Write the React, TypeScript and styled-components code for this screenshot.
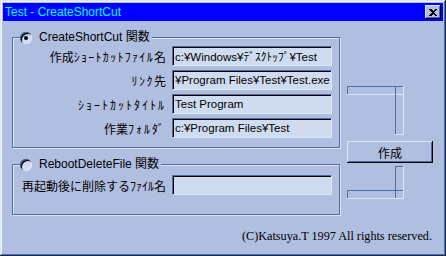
import styled, { createGlobalStyle } from 'styled-components';

const C = {
  bg: '#b0bee0',
  dark: '#4e6ca8',
  light: '#dce6f8',
  field: '#cfdcf0',
  shadow: '#1c2a52',
};

const GlobalStyle = createGlobalStyle`
  html, body { margin: 0; padding: 0; background: ${C.bg}; }
  * { box-sizing: border-box; }
`;

const Window = styled.div`
  width: 446px;
  height: 256px;
  padding: 3px;
  background: ${C.bg};
  display: flex;
  flex-direction: column;
  font-family: 'Liberation Sans', 'Noto Sans CJK JP', sans-serif;
  font-size: 12px;
  color: #000;
  box-shadow: inset -1px -1px 0 ${C.shadow}, inset 1px 1px 0 ${C.light},
    inset -2px -2px 0 ${C.dark}, inset 2px 2px 0 #eef3fc;
`;

const TitleBar = styled.div`
  height: 18px;
  background: #0000ff;
  color: #00ffff;
  display: flex;
  align-items: center;
  justify-content: space-between;
  padding: 0 2px 0 2px;
  line-height: 1;
`;

const CloseButton = styled.div`
  width: 16px;
  height: 14px;
  background: ${C.bg};
  display: flex;
  align-items: center;
  justify-content: center;
  box-shadow: inset -1px -1px 0 #000, inset 1px 1px 0 ${C.light},
    inset -2px -2px 0 ${C.dark};
`;

const Body = styled.div`
  display: flex;
  padding: 16px 0 0 9px;
`;

const LeftColumn = styled.div`
  width: 328px;
  display: flex;
  flex-direction: column;
  gap: 16px;
`;

const Group = styled.div<{ $pad: string }>`
  position: relative;
  border: 1px solid ${C.dark};
  box-shadow: inset 1px 1px 0 ${C.light}, 1px 1px 0 ${C.light};
  padding: ${(p) => p.$pad};
`;

const Legend = styled.label`
  position: absolute;
  left: 7px;
  top: -7px;
  display: flex;
  align-items: center;
  gap: 7px;
  padding-right: 2px;
  background: ${C.bg};
  line-height: 13px;
`;

const Radio = styled.span<{ $checked?: boolean }>`
  width: 12px;
  height: 12px;
  border-radius: 50%;
  background: ${C.field};
  display: flex;
  align-items: center;
  justify-content: center;
  box-shadow: inset 1px 1px 0 ${C.dark}, inset -1px -1px 0 ${C.light},
    inset 2px 2px 0 #000;
  &::after {
    content: '';
    width: 4px;
    height: 4px;
    border-radius: 50%;
    background: ${(p) => (p.$checked ? '#000' : 'transparent')};
  }
`;

const Fields = styled.div`
  display: grid;
  grid-template-columns: minmax(0, 1fr) 160px;
  column-gap: 6px;
  row-gap: 4px;
  align-items: center;
`;

const Label = styled.span`
  text-align: right;
  white-space: nowrap;
`;

const Hw = styled.span<{ $sp: number }>`
  letter-spacing: ${(p) => p.$sp}px;
`;

const Input = styled.div`
  height: 20px;
  background: ${C.field};
  border-top: 1px solid ${C.dark};
  border-left: 1px solid ${C.dark};
  border-bottom: 1px solid ${C.light};
  border-right: 1px solid ${C.light};
  box-shadow: inset 1px 1px 0 #000;
  padding: 0 1px 0 2px;
  display: flex;
  align-items: center;
  font-size: 11.5px;
  white-space: nowrap;
  overflow: hidden;
`;

const RightColumn = styled.div`
  margin-left: 7px;
  width: 86px;
  display: flex;
  flex-direction: column;
  padding-top: 49px;
`;

const Button = styled.button`
  width: 86px;
  height: 22px;
  margin: 6px 0 3px;
  background: ${C.bg};
  border: none;
  font: inherit;
  color: #000;
  padding: 0;
  box-shadow: inset -1px -1px 0 #000, inset 1px 1px 0 ${C.light},
    inset -2px -2px 0 ${C.dark};
`;

const Footer = styled.div`
  margin-top: auto;
  padding: 0 11px 10px 0;
  text-align: right;
  font-family: 'Liberation Serif', serif;
  font-size: 12.2px;
  line-height: 14px;
`;

function Etch({ boxes, h }: { boxes: [number, number, number, number][]; h: number }) {
  return (
    <svg width="86" height={h} style={{ display: 'block' }} shapeRendering="crispEdges">
      {boxes.map(([x, y, w, bh], i) => (
        <g key={i}>
          <path d={`M${x + 0.5} ${y + bh} V${y + 0.5} H${x + w}`} stroke={C.dark} fill="none" />
          <path d={`M${x} ${y + bh - 0.5} H${x + w - 0.5} V${y}`} stroke={C.light} fill="none" />
        </g>
      ))}
    </svg>
  );
}

export default function App() {
  return (
    <>
      <GlobalStyle />
      <Window>
        <TitleBar>
          <span>Test - CreateShortCut</span>
          <CloseButton>
            <svg width="8" height="7" viewBox="0 0 8 7" shapeRendering="crispEdges">
              <path d="M0 0h2l2 2 2-2h2L5 3.5 8 7H6L4 5 2 7H0l3-3.5z" fill="#000" />
            </svg>
          </CloseButton>
        </TitleBar>
        <Body>
          <LeftColumn>
            <Group $pad="8px 7px 9px 7px">
              <Legend>
                <Radio $checked />
                CreateShortCut 関数
              </Legend>
              <Fields>
                <Label>
                  作成<Hw $sp={1.3}>ｼｮｰﾄｶｯﾄﾌｧｲﾙ</Hw>名
                </Label>
                <Input>c:¥Windows¥ﾃﾞｽｸﾄｯﾌﾟ¥Test</Input>
                <Label>
                  <Hw $sp={1.5}>ﾘﾝｸ</Hw>先
                </Label>
                <Input>¥Program Files¥Test¥Test.exe</Input>
                <Label>
                  <Hw $sp={2}>ｼｮｰﾄｶｯﾄﾀｲﾄﾙ</Hw>
                </Label>
                <Input>Test Program</Input>
                <Label>
                  作業<Hw $sp={2}>ﾌｫﾙﾀﾞ</Hw>
                </Label>
                <Input>c:¥Program Files¥Test</Input>
              </Fields>
            </Group>
            <Group $pad="10px 7px 19px 7px">
              <Legend>
                <Radio />
                RebootDeleteFile 関数
              </Legend>
              <Fields>
                <Label>
                  再起動後に削除する<Hw $sp={0}>ﾌｧｲﾙ</Hw>名
                </Label>
                <Input />
              </Fields>
            </Group>
          </LeftColumn>
          <RightColumn>
            <Etch
              h={49}
              boxes={[
                [0, 0, 57, 9],
                [48, 0, 9, 49],
              ]}
            />
            <Button>作成</Button>
            <Etch
              h={33}
              boxes={[
                [48, 0, 9, 33],
                [0, 24, 57, 9],
              ]}
            />
          </RightColumn>
        </Body>
        <Footer>(C)Katsuya.T 1997 All rights reserved.</Footer>
      </Window>
    </>
  );
}
